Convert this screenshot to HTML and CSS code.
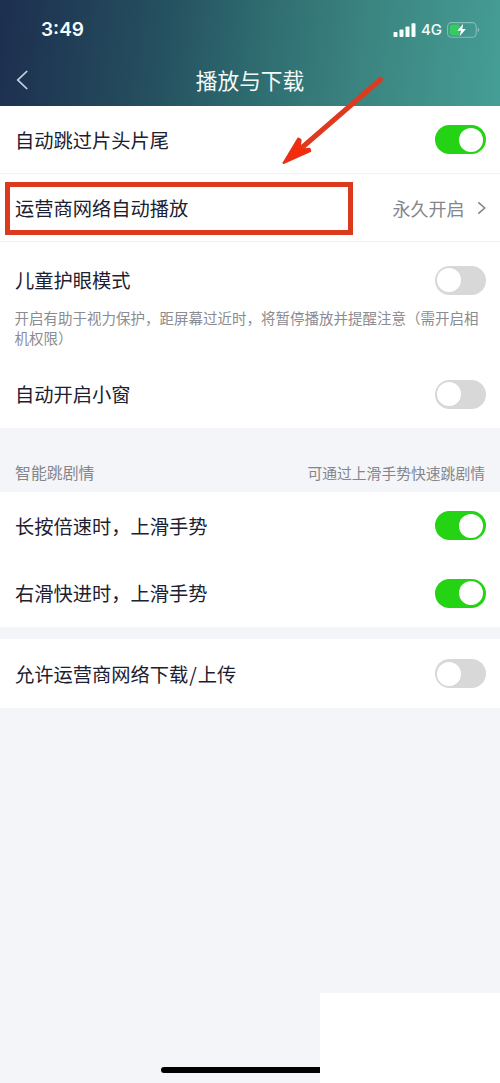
FILE: index.html
```html
<!DOCTYPE html>
<html lang="zh-CN">
<head>
<meta charset="utf-8">
<title>播放与下载</title>
<link rel="stylesheet" href="styles.css">
</head>
<body>
<div class="screen">
  <header class="header">
    <div class="status">
      <span class="time">3:49</span>
      <div class="status-right">
        <svg class="signal" width="24" height="14" viewBox="0 0 24 14" fill="#f4fffc">
          <rect x="0.5" y="9" width="4" height="5" rx="0.8"/><rect x="6.5" y="6.5" width="4" height="7.5" rx="0.8"/><rect x="12.5" y="3.5" width="4" height="10.5" rx="0.8"/><rect x="18.5" y="0.2" width="4" height="13.8" rx="0.8"/>
        </svg>
        <span class="network">4G</span>
        <svg class="battery" width="33" height="16" viewBox="0 0 33 16">
          <rect x="0.6" y="0.6" width="28.6" height="14.6" rx="4" fill="none" stroke="#82bdb7" stroke-width="1.1"/>
          <path d="M5 2.5H12.5V13.5H5Q2.6 13.5 2.6 11V5Q2.6 2.5 5 2.5Z" fill="#35cb61"/>
          <path d="M30.7 5.8Q32.3 6.4 32.3 8T30.7 10.2Z" fill="#82bdb7"/>
          <path d="M16.2 1.8L10.4 8.8H14L12.6 14.2L18.9 6.9H15.3Z" fill="#fff"/>
        </svg>
      </div>
    </div>
    <div class="navbar">
      <svg class="back" width="14" height="22" viewBox="0 0 14 22"><path d="M11.2 2L1.8 11L11.2 20" fill="none" stroke="#cbd5e8" stroke-width="1.7"/></svg>
      <h1 class="title">播放与下载</h1>
    </div>
  </header>

  <main>
    <section class="group">
      <div class="row line"><span>自动跳过片头片尾</span><i class="switch on"></i></div>
      <div class="row line focus">
        <span>运营商网络自动播放</span>
        <span class="value">永久开启<svg width="9" height="14" viewBox="0 0 9 14"><path d="M1.3 1.3L7.7 7L1.3 12.7" fill="none" stroke="#85858d" stroke-width="1.6"/></svg></span>
        <div class="highlight"></div>
        <svg class="arrow" width="104" height="90" viewBox="0 0 104 90">
          <path d="M1.5 88L16.2 63.5L18.6 64.8L17.6 74.6L27.6 73.8L28.3 76Z" fill="#f52b0c" stroke="#e3341a" stroke-width="2" stroke-linejoin="round"/>
          <path d="M98.5 4.5L16 76" fill="none" stroke="#de3a20" stroke-width="5" stroke-linecap="round"/>
          <path d="M3 86.8L15 69L24 76.5Z" fill="#f52b0c"/>
        </svg>
      </div>
      <div class="eye-care">
        <div class="row"><span>儿童护眼模式</span><i class="switch"></i></div>
        <p class="desc">开启有助于视力保护，距屏幕过近时，将暂停播放并提醒注意（需开启相机权限）</p>
      </div>
      <div class="row"><span>自动开启小窗</span><i class="switch"></i></div>
    </section>
    <div class="section-head"><span>智能跳剧情</span><span class="hint">可通过上滑手势快速跳剧情</span></div>
    <section class="group pair">
      <div class="row"><span>长按倍速时，上滑手势</span><i class="switch on"></i></div>
      <div class="row"><span>右滑快进时，上滑手势</span><i class="switch on"></i></div>
    </section>
    <section class="group separate">
      <div class="row"><span>允许运营商网络下载<span class="slash">/</span>上传</span><i class="switch"></i></div>
    </section>
  </main>
  <div class="home-bar"></div>
  <div class="corner"></div>
</div>
</body>
</html>
```

FILE: styles.css
```css
* { box-sizing: border-box; }
body { margin: 0; }
.screen {
  position: relative;
  display: flex;
  flex-direction: column;
  width: 500px;
  height: 1083px;
  overflow: hidden;
  background: #f3f5f8;
  color: #1c2030;
  font-family: "Noto Sans CJK SC", sans-serif;
  font-size: 19.25px;
}
.header {
  height: 106px;
  padding-top: 16px;
  background: linear-gradient(97deg, #1d2e4f 0%, #25505f 32%, #2e6b70 51%, #3b8480 72%, #459e95 100%);
  color: #f2fbfa;
}
.status {
  display: flex;
  align-items: center;
  justify-content: space-between;
  height: 28px;
  padding: 0 20px 0 41px;
}
.time { font: 600 19px/28px Inter, sans-serif; }
.status-right { display: flex; align-items: center; }
.network { margin: 0 5px 0 4px; font: 500 15px/28px Inter, sans-serif; }
.navbar {
  display: grid;
  grid-template-columns: 44px 1fr 44px;
  align-items: center;
  height: 71px;
}
.back { margin-left: 16px; }
.title { margin: 0; text-align: center; font-size: 21.7px; font-weight: 400; line-height: 30px; }
.group { background: #fff; }
.row {
  display: flex;
  align-items: center;
  justify-content: space-between;
  height: 68px;
  padding: 0 14.5px 0 15px;
  line-height: 28px;
}
.line { border-bottom: 1px solid #f3f3f5; }
.switch {
  width: 51px;
  height: 29px;
  padding: 2.5px;
  border-radius: 15px;
  background: #d8d8d8;
}
.switch::before {
  content: "";
  display: block;
  width: 24px;
  height: 24px;
  border-radius: 50%;
  background: #fff;
}
.switch.on { background: #24d313; }
.switch.on::before { margin-left: 22px; }
.focus { position: relative; }
.value { display: flex; align-items: center; gap: 12px; color: #85858d; font-size: 18px; }
.highlight {
  position: absolute;
  left: 5px;
  top: 8px;
  width: 348px;
  height: 53px;
  border: 5px solid #db3a1e;
}
.arrow { position: absolute; left: 282px; top: -99px; }
.eye-care { height: 118px; padding-top: 4px; }
.desc {
  width: 470px;
  margin: -6px 0 0 14.5px;
  color: #8b8b92;
  font-size: 14.5px;
  line-height: 20px;
}
.section-head {
  display: flex;
  align-items: center;
  justify-content: space-between;
  height: 64px;
  padding: 24px 15px 0;
  color: #85858d;
  font-size: 15.9px;
}
.hint { font-size: 14.8px; }
.pair .row { height: 67.5px; }
.separate { margin-top: 12px; }
.separate .row { height: 69px; }
.slash { padding: 0 1px; }
.home-bar {
  position: absolute;
  left: 161px;
  bottom: 10px;
  width: 178px;
  height: 6px;
  border-radius: 3px;
  background: #000;
}
.corner {
  position: absolute;
  right: 0;
  bottom: 0;
  width: 180px;
  height: 90px;
  background: #fff;
}
```
